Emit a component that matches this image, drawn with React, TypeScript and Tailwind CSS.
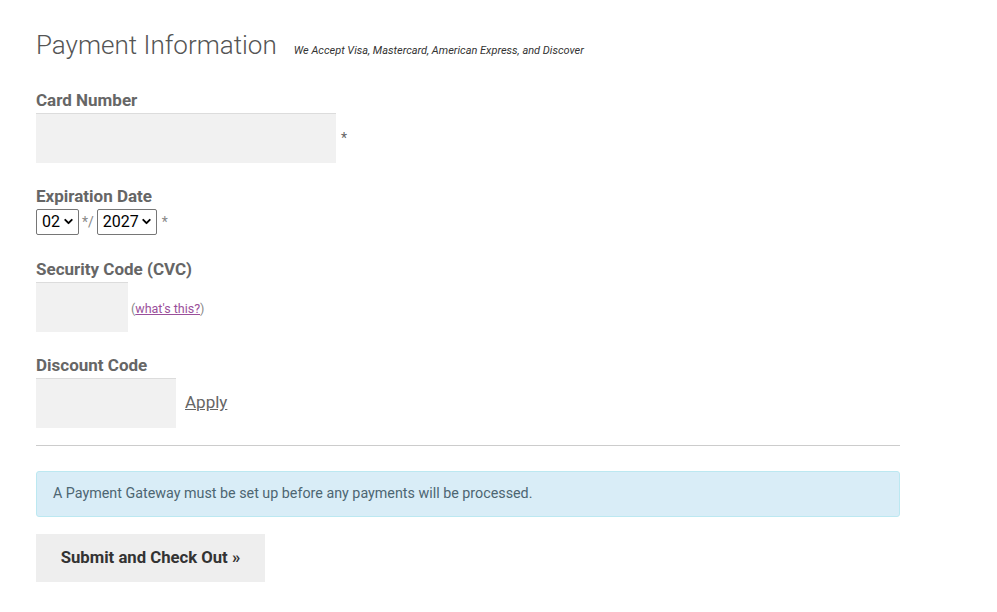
import { ChevronDown } from "lucide-react";

type SelectProps = {
  value: string;
  options: string[];
  width: string;
};

function SmallSelect({ value, options, width }: SelectProps) {
  return (
    <span className={`relative inline-flex h-[26px] ${width}`}>
      <select
        defaultValue={value}
        className="h-full w-full appearance-none rounded-[2px] border border-[#767676] bg-white pl-[5px] text-[16px] leading-none text-black outline-none"
      >
        {options.map((o) => (
          <option key={o}>{o}</option>
        ))}
      </select>
      <ChevronDown
        className="pointer-events-none absolute right-[4px] top-[6px] h-[13px] w-[13px] text-black"
        strokeWidth={3.5}
      />
    </span>
  );
}

function FieldLabel({ children }: { children: React.ReactNode }) {
  return (
    <label className="mb-[2px] block text-[17px] font-bold leading-[22px] text-[#666]">
      {children}
    </label>
  );
}

export default function App() {
  const months = ["01", "02", "03", "04", "05", "06", "07", "08", "09", "10", "11", "12"];
  const years = ["2025", "2026", "2027", "2028", "2029", "2030"];

  return (
    <div
      className="min-h-[612px] w-[997px] bg-white pl-[36px] pt-[27px] text-[#666]"
      style={{ fontFamily: "Roboto, 'Noto Sans', sans-serif" }}
    >
      <div className="w-[864px]">
        <div className="mb-[20px] flex items-baseline gap-[17px] leading-[36px]">
          <h2 className="text-[26px] font-light text-[#555]">Payment Information</h2>
          <span className="text-[11px] italic text-[#333]">
            We Accept Visa, Mastercard, American Express, and Discover
          </span>
        </div>

        <div className="mb-[22px]">
          <FieldLabel>Card Number</FieldLabel>
          <div className="flex items-center gap-[5px]">
            <input className="h-[50px] w-[300px] border-t border-[#dcdcdc] bg-[#f1f1f1] px-3 outline-none" />
            <span className="text-[14px] text-[#666]">*</span>
          </div>
        </div>

        <div className="mb-[23px]">
          <FieldLabel>Expiration Date</FieldLabel>
          <div className="flex items-center text-[14px] text-[#888]">
            <SmallSelect value="02" options={months} width="w-[43px]" />
            <span className="mx-[3px]">*/</span>
            <SmallSelect value="2027" options={years} width="w-[60px]" />
            <span className="ml-[5px]">*</span>
          </div>
        </div>

        <div className="mb-[22px]">
          <FieldLabel>Security Code (CVC)</FieldLabel>
          <div className="flex items-end gap-[3px]">
            <input className="h-[50px] w-[92px] border-t border-[#dcdcdc] bg-[#f1f1f1] px-3 outline-none" />
            <span className="mb-[13px] text-[12.5px] text-[#888]">
              (
              <a href="#" className="text-[#9a4f9a] underline">
                what's this?
              </a>
              )
            </span>
          </div>
        </div>

        <div className="mb-[17px]">
          <FieldLabel>Discount Code</FieldLabel>
          <div className="flex items-center gap-[9px]">
            <input className="h-[50px] w-[140px] border-t border-[#dcdcdc] bg-[#f1f1f1] px-3 outline-none" />
            <a href="#" className="text-[17px] text-[#666] underline">
              Apply
            </a>
          </div>
        </div>

        <hr className="mb-[25px] border-t border-[#ccc]" />

        <div className="mb-[17px] flex h-[46px] items-center rounded-[3px] border border-[#bce8f1] bg-[#d9edf7] px-[16px] text-[14.3px] text-[#4d6672]">
          A Payment Gateway must be set up before any payments will be processed.
        </div>

        <button className="h-[48px] w-[229px] bg-[#eee] text-[16.7px] font-bold text-[#333]">
          Submit and Check Out »
        </button>
      </div>
    </div>
  );
}
